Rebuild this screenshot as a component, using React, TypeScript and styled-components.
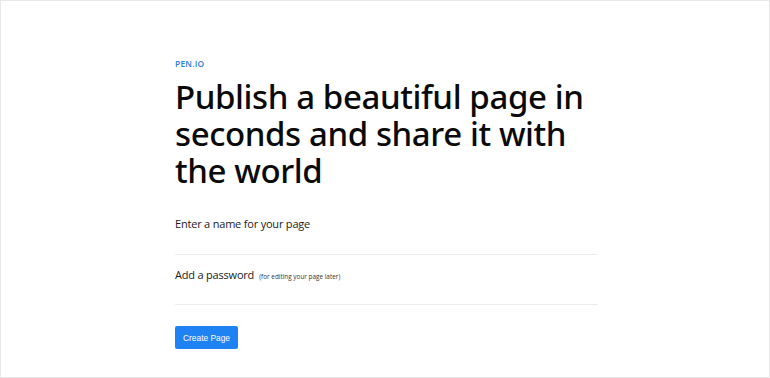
import React from 'react';
import styled, { createGlobalStyle } from 'styled-components';

const GlobalStyle = createGlobalStyle`
  html, body {
    margin: 0;
    padding: 0;
    background: #ffffff;
  }
  * {
    box-sizing: border-box;
  }
`;

const Frame = styled.div`
  width: 770px;
  height: 378px;
  border: 1px solid #e8e8e8;
  background: #ffffff;
  display: flex;
  justify-content: flex-start;
  padding: 58px 0 0 174px;
  font-family: 'Open Sans', 'Noto Sans', sans-serif;
  color: #111;
`;

const Content = styled.main`
  width: 423px;
  display: flex;
  flex-direction: column;
`;

const Brand = styled.div`
  font-size: 8.5px;
  line-height: 10px;
  font-weight: 600;
  color: #2f7be0;
  letter-spacing: 0.2px;
`;

const Title = styled.h1`
  margin: 9px 0 0;
  font-family: 'Noto Sans', 'Open Sans', sans-serif;
  font-size: 33px;
  line-height: 37px;
  font-weight: 500;
  color: #0a0a0a;
  letter-spacing: -0.4px;
`;

const Fields = styled.div`
  margin-top: 15px;
  display: flex;
  flex-direction: column;
`;

const Field = styled.label`
  display: flex;
  align-items: baseline;
  gap: 5px;
  height: 50px;
  padding-top: 12px;
  border-bottom: 1px solid #ececec;
  font-size: 11px;
  letter-spacing: -0.2px;
  color: #1a1a1a;

  &:first-child {
    height: 51px;
  }
`;

const Hint = styled.span`
  font-size: 6.4px;
  letter-spacing: 0;
  color: #333;
`;

const Button = styled.button`
  margin-top: 21px;
  align-self: flex-start;
  width: 63px;
  height: 23px;
  padding: 0;
  border: none;
  border-radius: 2px;
  background: #1e82f2;
  color: #ffffff;
  font-family: 'Liberation Sans', Arial, sans-serif;
  font-size: 8.4px;
  cursor: pointer;
`;

export default function App() {
  return (
    <>
      <GlobalStyle />
      <Frame>
        <Content>
          <Brand>PEN.IO</Brand>
          <Title>
            Publish a beautiful page in seconds and share it with the world
          </Title>
          <Fields>
            <Field>Enter a name for your page</Field>
            <Field>
              Add a password <Hint>(for editing your page later)</Hint>
            </Field>
          </Fields>
          <Button>Create Page</Button>
        </Content>
      </Frame>
    </>
  );
}
